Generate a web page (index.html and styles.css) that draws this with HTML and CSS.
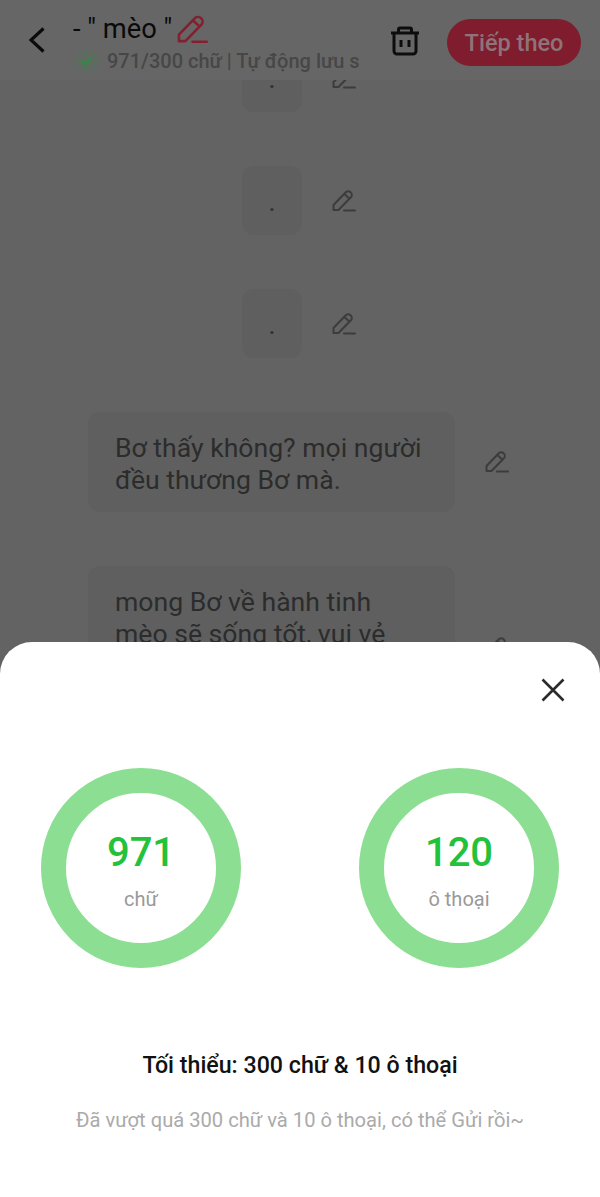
FILE: index.html
```html
<!DOCTYPE html>
<html lang="vi">
<head>
    <meta charset="UTF-8">
    <meta name="viewport" content="width=device-width, initial-scale=1.0">
    <title>Tiếp theo</title>
    <link rel="stylesheet" href="styles.css">
</head>
<body>
    <header class="top-bar">
        <svg class="back-icon" viewBox="0 0 16 26"><path d="M14.5 1.5 2 13l12.500 11.500"/></svg>
        <div class="title-box">
            <div class="title-row">
                <span class="title">- " mèo "</span>
                <svg class="pencil pencil-red" viewBox="0 0 24 24"><path d="M1.500 21v-5L13.500 3.500a3.600 3.600 0 0 1 5.400 4.800L6.500 21zM13.200 5.800l3.800 3.400"/><path d="M12 21.500h11"/></svg>
            </div>
            <div class="status-row">
                <span class="check-badge">
                    <svg viewBox="0 0 14 14"><path d="M1 7l4 4 8-8.500"/></svg>
                </span>
                <span class="status-text">971/300 chữ | Tự động lưu s</span>
            </div>
        </div>
        <svg class="trash-icon" viewBox="0 0 30 30">
            <path d="M1 7h28M8.500 7V3.500A1.500 1.500 0 0 1 10 2h10a1.500 1.500 0 0 1 1.500 1.500V7"/>
            <path d="M4 7v18a3 3 0 0 0 3 3h16a3 3 0 0 0 3-3V7M11 14v7M19 14v7"/>
        </svg>
        <button class="next-btn">Tiếp theo</button>
    </header>

    <main class="dialog-list">
        <div class="dialog-row">
            <div class="bubble bubble-dot">.</div>
            <svg class="pencil" viewBox="0 0 24 24"><path d="M1.500 21v-5L13.500 3.500a3.600 3.600 0 0 1 5.400 4.800L6.500 21zM13.200 5.800l3.800 3.400"/><path d="M12 21.500h11"/></svg>
        </div>
        <div class="dialog-row">
            <div class="bubble bubble-dot">.</div>
            <svg class="pencil" viewBox="0 0 24 24"><path d="M1.500 21v-5L13.500 3.500a3.600 3.600 0 0 1 5.400 4.800L6.500 21zM13.200 5.800l3.800 3.400"/><path d="M12 21.500h11"/></svg>
        </div>
        <div class="dialog-row">
            <div class="bubble bubble-dot">.</div>
            <svg class="pencil" viewBox="0 0 24 24"><path d="M1.500 21v-5L13.500 3.500a3.600 3.600 0 0 1 5.400 4.800L6.500 21zM13.200 5.800l3.800 3.400"/><path d="M12 21.500h11"/></svg>
        </div>
        <div class="dialog-row">
            <div class="bubble bubble-text">Bơ thấy không? mọi người đều thương Bơ mà.</div>
            <svg class="pencil" viewBox="0 0 24 24"><path d="M1.500 21v-5L13.500 3.500a3.600 3.600 0 0 1 5.400 4.800L6.500 21zM13.200 5.800l3.800 3.400"/><path d="M12 21.500h11"/></svg>
        </div>
        <div class="dialog-row">
            <div class="bubble bubble-text bubble-long">mong Bơ về hành tinh mèo sẽ sống tốt, vui vẻ</div>
            <svg class="pencil" viewBox="0 0 24 24"><path d="M1.500 21v-5L13.500 3.500a3.600 3.600 0 0 1 5.400 4.800L6.500 21zM13.200 5.800l3.800 3.400"/><path d="M12 21.500h11"/></svg>
        </div>
    </main>

    <section class="sheet">
        <div class="sheet-head">
            <svg class="close-icon" viewBox="0 0 24 24"><path d="M1.500 1.500l21 21M22.500 1.500l-21 21"/></svg>
        </div>
        <div class="rings">
            <div class="ring">
                <span class="ring-num">971</span>
                <span class="ring-label">chữ</span>
            </div>
            <div class="ring">
                <span class="ring-num">120</span>
                <span class="ring-label">ô thoại</span>
            </div>
        </div>
        <h2 class="sheet-title">Tối thiểu: 300 chữ &amp; 10 ô thoại</h2>
        <p class="sheet-note">Đã vượt quá 300 chữ và 10 ô thoại, có thể Gửi rồi~</p>
    </section>
</body>
</html>
```

FILE: styles.css
```css
* {
    box-sizing: border-box;
}
html, body {
    height: 100%;
}
body {
    margin: 0;
    display: flex;
    flex-direction: column;
    overflow: hidden;
    background-color: #636363;
    font-family: Roboto, "Noto Sans", sans-serif;
}

.top-bar {
    position: relative;
    z-index: 1;
    flex: none;
    height: 80px;
    display: flex;
    align-items: center;
    padding: 0 19px 0 29px;
    background-color: #666;
}
.back-icon {
    flex: none;
    width: 16px;
    height: 26px;
    margin-right: 28px;
    fill: none;
    stroke: #0a0a0a;
    stroke-width: 3.2;
}
.title-box {
    flex: none;
    align-self: flex-start;
    width: 286px;
    padding-top: 13px;
}
.title-row {
    display: flex;
    align-items: center;
    height: 32px;
}
.title {
    font-size: 27.300px;
    line-height: 32px;
    color: #0a0a0a;
    white-space: nowrap;
}
.pencil {
    flex: none;
    width: 24px;
    height: 24px;
    fill: none;
    stroke: #3c3c3c;
    stroke-width: 2;
    stroke-linejoin: round;
    stroke-linecap: round;
}
.pencil-red {
    width: 31px;
    height: 31px;
    margin-left: 5px;
    stroke: #83202f;
}
.status-row {
    display: flex;
    align-items: center;
    height: 28px;
    margin-top: 2px;
    margin-left: 2px;
}
.check-badge {
    flex: none;
    width: 24px;
    height: 24px;
    margin-right: 8px;
    border-radius: 50%;
    background-color: #5f6a61;
    display: flex;
    align-items: center;
    justify-content: center;
}
.check-badge svg {
    width: 12px;
    height: 12px;
    fill: none;
    stroke: #2a8f3e;
    stroke-width: 2.400;
}
.status-text {
    font-size: 20px;
    font-weight: 500;
    color: #474747;
    white-space: nowrap;
}
.trash-icon {
    flex: none;
    width: 30px;
    height: 30px;
    margin-left: 31px;
    margin-top: 2px;
    fill: none;
    stroke: #0d0d0d;
    stroke-width: 3;
    stroke-linejoin: round;
}
.next-btn {
    flex: none;
    width: 134px;
    height: 47px;
    margin-left: auto;
    margin-top: 5px;
    padding: 0;
    border: 0;
    border-radius: 24px;
    background-color: #7f1c2e;
    color: #8e7478;
    font-family: inherit;
    font-size: 23.500px;
    font-weight: 500;
}

.dialog-list {
    flex: none;
    margin-top: -37px;
    padding-right: 2px;
    display: flex;
    flex-direction: column;
    gap: 54px;
}
.dialog-row {
    display: flex;
    align-items: center;
    justify-content: center;
    gap: 30px;
}
.bubble {
    background-color: #5f5f5f;
    border-radius: 12px;
    color: #2c2c2c;
    font-size: 26.600px;
    line-height: 32px;
}
.bubble-dot {
    width: 60px;
    height: 69px;
    padding: 20px 0 0;
    text-align: center;
}
.bubble-text {
    width: 367px;
    height: 100px;
    margin-left: -1px;
    padding: 20px 30px 0 27px;
}
.bubble-long {
    height: 164px;
}

.sheet {
    position: absolute;
    z-index: 2;
    left: 0;
    right: 0;
    bottom: 0;
    height: 555px;
    background-color: #fff;
    border-radius: 32px 32px 0 0;
    text-align: center;
}
.sheet-head {
    display: flex;
    justify-content: flex-end;
    padding: 36px 35px 0 0;
    height: 126px;
}
.close-icon {
    width: 24px;
    height: 24px;
    fill: none;
    stroke: #2b2b2b;
    stroke-width: 2.600;
}
.rings {
    display: flex;
    justify-content: space-between;
    padding: 0 41px;
}
.ring {
    width: 200px;
    height: 200px;
    padding-top: 4px;
    border: 25px solid #8cdf92;
    border-radius: 50%;
    display: flex;
    flex-direction: column;
    align-items: center;
    justify-content: center;
}
.ring-num {
    font-size: 40px;
    line-height: 48px;
    font-weight: 500;
    color: #24c13b;
}
.ring-label {
    margin-top: 10px;
    font-size: 20px;
    line-height: 24px;
    color: #999;
}
.sheet-title {
    margin: 81px 0 0;
    font-size: 23.200px;
    line-height: 32px;
    font-weight: 500;
    color: #111;
}
.sheet-note {
    margin: 25px 0 0;
    font-size: 20.150px;
    line-height: 28px;
    color: #aaa;
}
```
